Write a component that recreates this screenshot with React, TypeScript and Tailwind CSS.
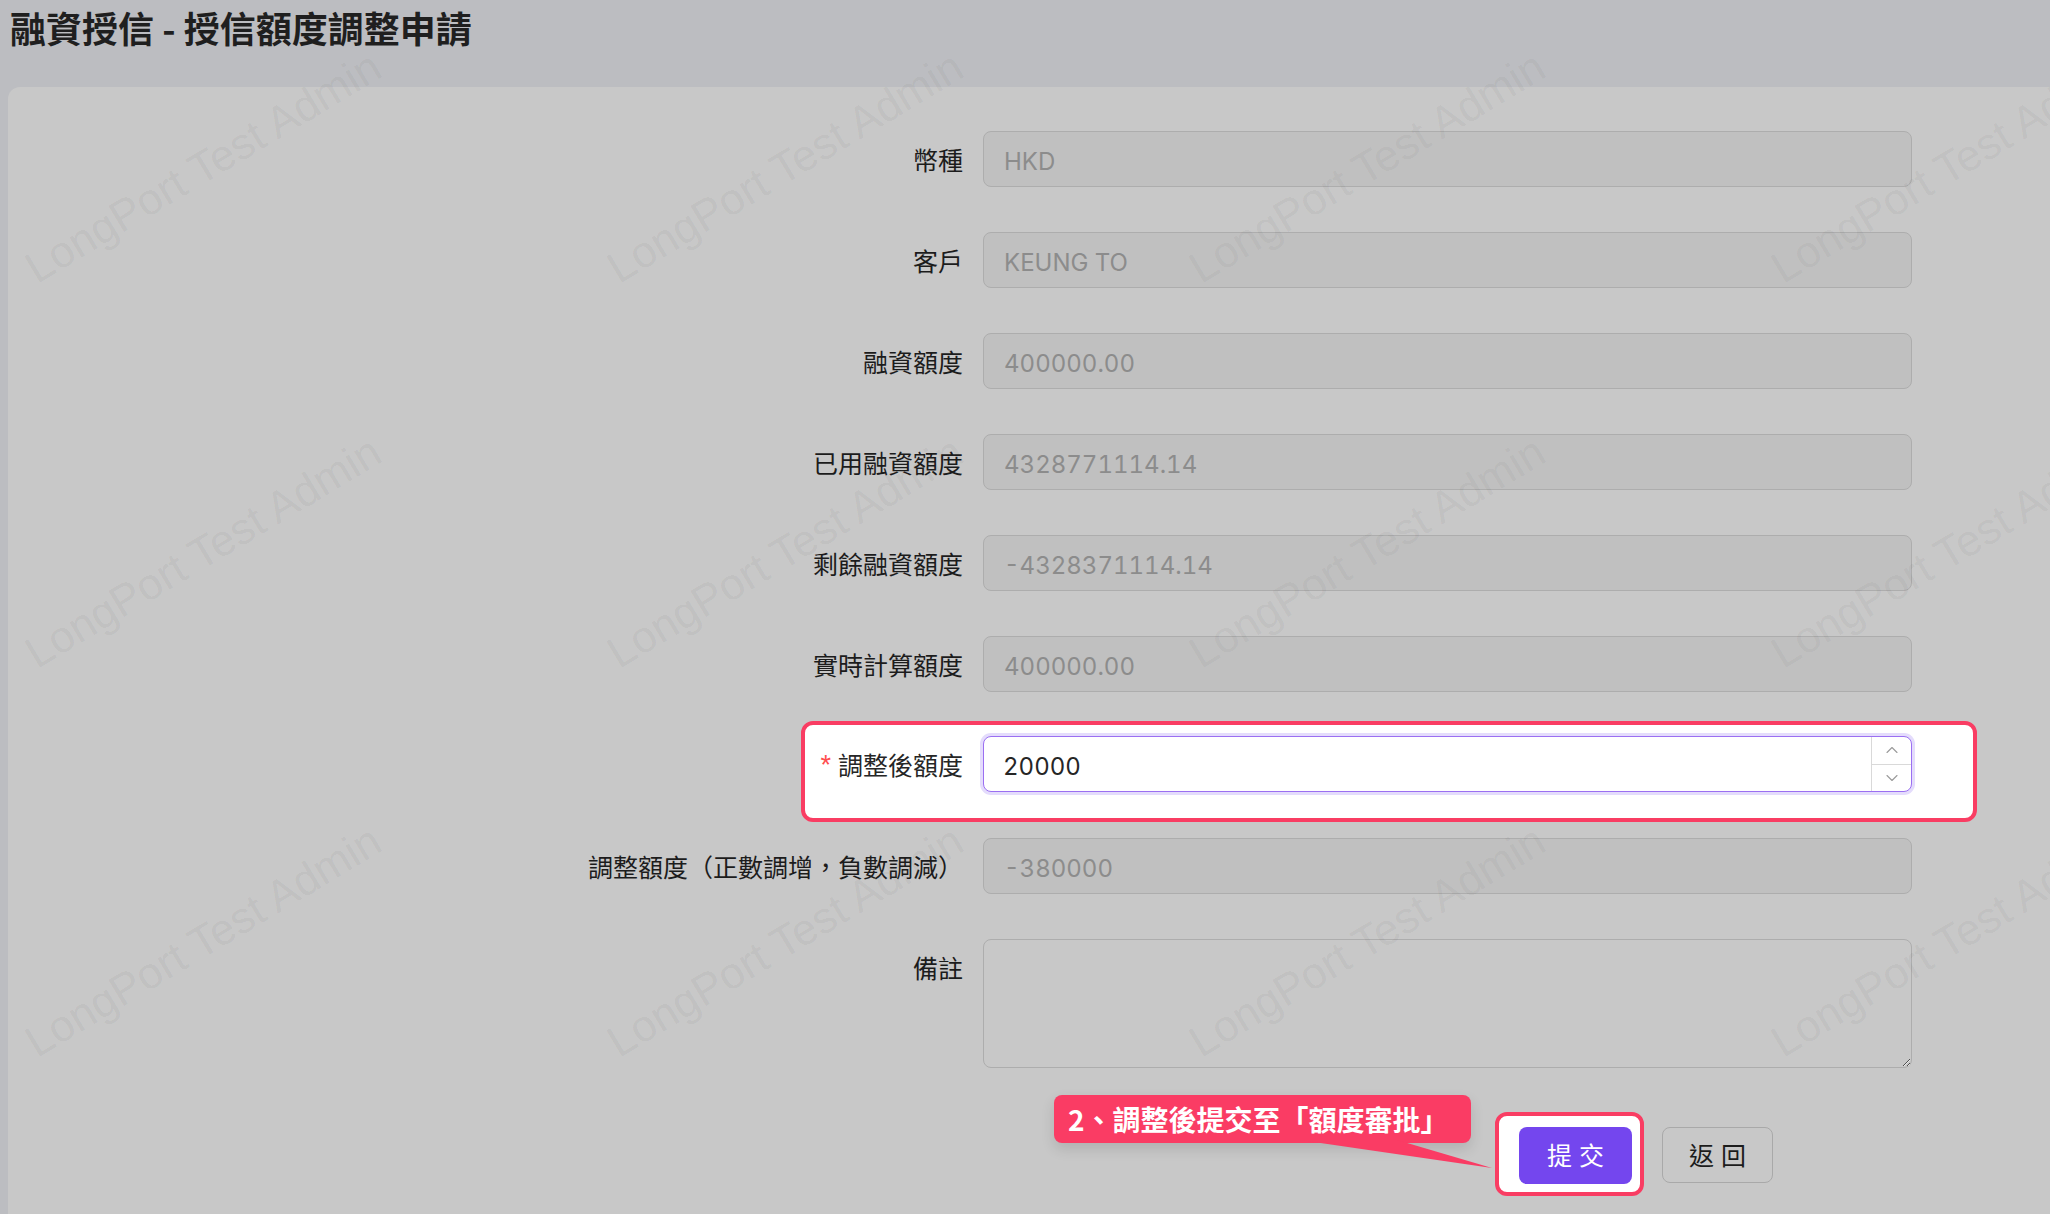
import { ChevronDown, ChevronUp } from 'lucide-react'

const rows = [
  { label: '幣種', value: 'HKD' },
  { label: '客戶', value: 'KEUNG TO' },
  { label: '融資額度', value: '400000.00' },
  { label: '已用融資額度', value: '4328771114.14' },
  { label: '剩餘融資額度', value: '-4328371114.14' },
  { label: '實時計算額度', value: '400000.00' },
]

// watermark grid centres (page px)
const marksX = [203, 785, 1367, 1949]
const marksY = [167, 552, 941]

const ReadonlyRow = ({ label, value }: { label: string; value: string }) => (
  <div className="flex h-[101px] pt-[16px]">
    <div className="flex h-[56px] w-[955px] items-center justify-end pt-[5px] text-[25px] text-[#1c1c1c]">
      {label}
    </div>
    <div className="ml-[20px] flex h-[56px] w-[929px] items-center rounded-[8px] border-[1.5px] border-[#adadad] bg-[#c0c0c0] px-[20px] pt-[5px] text-[24px] tabular-nums text-[#8c8c8c]">
      {value}
    </div>
  </div>
)

const Watermarks = () => (
  <div className="pointer-events-none absolute inset-0 z-[5] overflow-hidden">
    {marksY.map((y) =>
      marksX.map((x) => (
        <div
          key={`${x}-${y}`}
          className="absolute -translate-x-1/2 -translate-y-1/2 -rotate-[31deg] whitespace-nowrap font-['Liberation_Sans',sans-serif] text-[44px] text-black/[0.05]"
          style={{ left: x, top: y }}
        >
          LongPort Test Admin
        </div>
      )),
    )}
  </div>
)

export default function App() {
  return (
    <div className="relative flex h-[1214px] w-[2050px] flex-col overflow-hidden bg-[#bcbdc1] font-['Inter','Noto_Sans_CJK_TC',sans-serif]">
      <div className="h-[87px] shrink-0 pl-[10px] pt-[3px]">
        <h1 className="font-['Noto_Sans_CJK_TC',sans-serif] text-[36px] font-bold leading-[48px] text-[#1f1f1f]">
          融資授信 - 授信額度調整申請
        </h1>
      </div>

      <div className="ml-[8px] flex-1 rounded-tl-[12px] bg-[#c8c8c8] pt-[28px]">
        {rows.map((r) => (
          <ReadonlyRow key={r.label} label={r.label} value={r.value} />
        ))}

        {/* highlighted step: adjusted amount */}
        <div className="h-[101px]">
          <div className="relative z-10 ml-[793px] flex h-[101px] w-[1176px] items-start rounded-[12px] border-4 border-[#f93d63] bg-white pt-[11px]">
            <div className="flex h-[56px] w-[158px] items-center justify-end pt-[5px] text-[25px] text-[#262626]">
              <span className="mr-[7px] -mt-[2px] font-['Liberation_Sans',sans-serif] text-[27px] leading-none text-[#ff4d4f]">*</span>
              調整後額度
            </div>
            <div className="ml-[20px] flex h-[56px] w-[929px] items-center rounded-[8px] border-[1.5px] border-[#9b6ff2] bg-white shadow-[0_0_0_3px_#e4dcfc]">
              <div className="flex-1 px-[19px] pt-[5px] text-[24px] tabular-nums text-[#262626]">20000</div>
              <div className="flex h-full w-[40px] flex-col border-l border-[#d9d9d9]">
                <div className="flex flex-1 items-center justify-center border-b border-[#d9d9d9] text-[#9a9a9a]">
                  <ChevronUp size={20} strokeWidth={1.3} />
                </div>
                <div className="flex flex-1 items-center justify-center text-[#9a9a9a]">
                  <ChevronDown size={20} strokeWidth={1.3} />
                </div>
              </div>
            </div>
          </div>
        </div>

        <ReadonlyRow label="調整額度（正數調增，負數調減）" value="-380000" />

        <div className="flex pt-[16px]">
          <div className="flex h-[56px] w-[955px] items-center justify-end pt-[5px] text-[25px] text-[#1c1c1c]">
            備註
          </div>
          <textarea className="ml-[20px] h-[129px] w-[929px] rounded-[8px] border-[1.5px] border-[#adadad] bg-[#c8c8c8] outline-none" />
        </div>

        <div className="mt-[44px] flex items-start pl-[1487px]">
          <div className="relative z-10 flex h-[84px] w-[149px] items-start rounded-[12px] border-4 border-[#f93d63] bg-white pl-[20px] pt-[11px]">
            <button className="h-[57px] w-[113px] rounded-[8px] bg-[#7446ee] pt-[3px] text-[25px] text-white">
              提 交
            </button>
          </div>
          <button className="ml-[18px] mt-[15px] h-[56px] w-[111px] rounded-[8px] border-[1.5px] border-[#a9a9a9] bg-[#c8c8c8] pt-[3px] text-[25px] text-[#1c1c1c]">
            返 回
          </button>
        </div>
      </div>

      <Watermarks />

      {/* tutorial callout */}
      <div className="absolute left-[1054px] top-[1095px] z-20 flex h-[48px] w-[417px] items-center rounded-[8px] bg-[#fa3c64] pl-[14px] font-['Noto_Sans_CJK_TC',sans-serif] text-[28px] font-bold text-white shadow-[0_6px_14px_rgba(0,0,0,0.12)]">
        2、調整後提交至「額度審批」
      </div>
      <svg className="absolute left-[1290px] top-[1140px] z-20" width="210" height="32" viewBox="0 0 210 32">
        <polygon points="10,0 107,0 202,28" fill="#fa3c64" />
      </svg>
    </div>
  )
}
